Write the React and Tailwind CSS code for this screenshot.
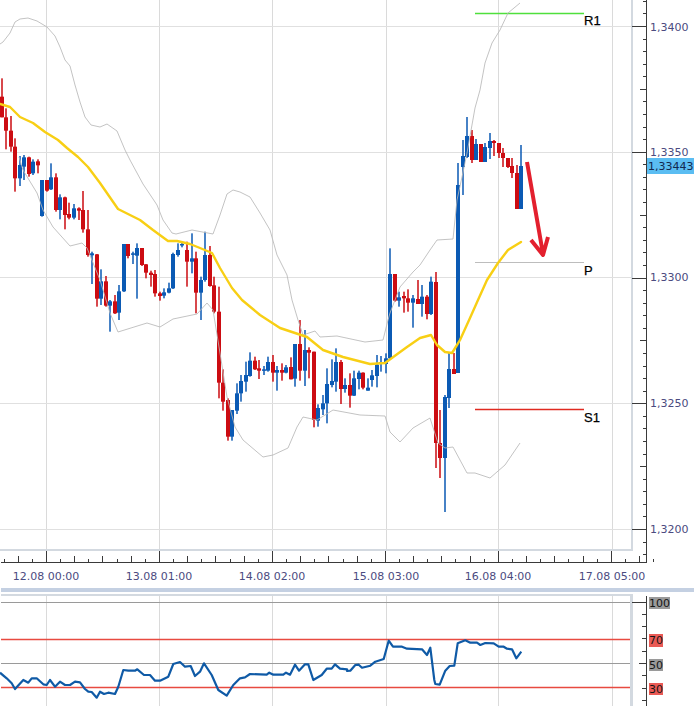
const LABEL = "font-['DejaVu_Sans',sans-serif] text-[11px]";
const PIVOT = "font-['Liberation_Sans',Arial,sans-serif] text-[13px]";
const GRID_X = [46, 159, 272, 386, 498, 612];
const RED = "#cc0c12";
const BLUE = "#0b5ab4";

const z1 = [
  ["r",55,110,172,172],["r",145,172,212,268],["r",168,212,260,275],["r",235,260,355,395],["b",288,315,355,378],
  ["b",285,292,320,360],["r",290,292,342,350],["b",298,305,340,345],["r",298,304,316,340],["b",360,360,468,470],
  ["r",360,360,392,395],["b",310,352,388,390],["r",340,352,450,455],["b",403,412,450,478],["r",410,412,465,508],
  ["r",428,462,473,478],["b",432,445,473,478],["r",442,445,452,480],["r",393,450,508,518],["r",450,508,585,590],
  ["b",575,580,586,672],["r",582,583,716,740],["b",628,664,716,735],["r",648,664,737,740],["b",720,724,737,815],
  ["r",705,724,760,762],["b",675,694,758,780],["b",552,552,694,696],["r",552,552,588,595],["b",575,580,582,612],
  ["b",550,564,587,716],["r",564,564,615,618],["r",612,613,638,655],["r",632,638,645,680],["r",630,642,700,710],
  ["r",695,700,708,722],["b",685,697,707,715],["b",668,685,698,700],["b",578,582,685,687],["b",550,570,585,590],
  ["b",548,552,556,562],["r",545,570,605,680],["b",520,595,605,640],["r",575,595,698,760],["b",650,660,698,780],
  ["b",515,585,660,665],["r",558,585,678,680],["r",650,676,755,760],
].map(([c, a, b, d, e]) => [c, 60 + a / 3, 60 + b / 3, 60 + d / 3, 60 + e / 3]);

const z2 = [
  ["r",170,245,458,505],["r",418,458,515,542],["r",505,510,620,632],["b",540,540,620,632],["b",460,490,542,552],
  ["b",435,453,490,515],["b",395,435,455,485],["b",367,392,438,440],["r",380,392,418,420],["r",390,415,422,447],
  ["b",408,418,422,435],["b",380,396,422,425],["r",375,396,428,455],["b",408,420,428,482],["r",400,420,428,452],
  ["b",405,412,428,430],["r",382,411,448,448],["b",345,342,446,470],["r",270,342,422,452],["b",300,360,422,468],
  ["r",352,360,368,445],["r",365,365,570,592],["b",523,534,572,590],["b",495,520,538,555],["b",415,462,520,580],
  ["b",388,453,465,472],["b",355,396,455,485],["r",390,396,477,522],["b",445,465,477,488],["r",430,465,497,533],
  ["b",422,445,497,498],["b",422,428,447,478],["r",427,428,473,478],["b",445,473,482,482],["b",420,436,450,470],
  ["b",375,404,438,472],["b",378,396,402,425],["b",370,385,402,430],["b",55,132,385,388],["r",132,132,212,215],
  ["b",185,202,212,230],["r",185,198,205,248],["r",178,205,218,245],["b",195,205,218,293],["r",150,207,222,222],
  ["b",165,200,222,260],["r",195,200,252,268],["b",140,155,252,255],
].map(([c, a, b, d, e]) => [c, 230 + a / 3, 230 + b / 3, 230 + d / 3, 230 + e / 3]);

const real = [
  ["r",272,282,443,468],["r",410,443,458,478],["b",395,397,458,512],["b",353,369,398,408],["r",353,369,374,374],
  ["b",163,185,373,373],["b",140,156,167,195],["b",117,136,157,158],["r",130,136,160,163],["b",139,144,160,160],
  ["r",144,144,162,162],["b",143,147,162,162],["b",133,141,148,159],["r",140,141,143,156],["r",143,143,153,158],
  ["r",148,153,158,167],["r",158,158,167,168],["r",158,166,173,178],["r",165,173,209,209],["b",145,166,209,209],
];

const candles = [...z1, ...z2, ...real];

const upper = "0,44 3,42 10,33 15,22 20,19 28,18 37,21 47,27 55,36 60,47 65,60 70,66 75,85 80,102 85,117 91,125 100,127 107,124 117,131 125,150 130,160 143,184 157,205 163,220 172,233 176,234 192,230 213,234 220,215 227,194 233,190 240,192 250,197 260,213 270,230 277,255 287,275 292,300 298,320 303,335 315,331 320,337 337,336 365,342 383,340 388,320 390,313 400,287 413,272 420,265 430,250 437,240 453,239 457,200 462,177 467,153 475,108 480,90 485,63 492,43 500,30 508,13 520,3";
const lower = "19,157 23,170 37,193 43,210 53,227 70,246 82,243 87,248 100,280 110,313 118,332 147,323 160,327 173,319 197,314 207,303 213,310 220,353 227,397 235,427 243,440 263,457 273,455 288,448 297,427 303,417 317,420 333,410 360,415 385,416 390,432 400,442 413,428 430,418 438,443 445,448 453,447 467,473 475,473 490,478 505,465 520,443";
const ma = "0,104 10,107 20,117 33,123 45,132 58,140 67,148 78,157 88,167 100,183 118,209 140,220 153,230 168,241 177,241 190,244 200,248 212,253 220,268 232,288 242,300 260,315 280,328 307,337 323,350 343,357 370,364 385,363 407,347 420,338 431,335 437,345 445,352 452,353 457,345 460,340 470,318 478,300 487,280 498,263 508,250 521,242";

const rsiA = [[0,398],[20,415],[35,430],[45,447],[70,420],[85,428],[95,415],[110,415],[130,433],[140,435],[150,420],[165,440],[180,425],[195,435],[210,435],[225,425],[240,427],[255,447],[265,455],[275,456],[290,473],[300,455],[312,462],[325,458],[345,462],[355,440],[370,390],[385,392],[405,392],[412,388],[432,405],[450,405],[465,422],[480,422],[505,410],[520,372],[540,366],[555,380],[572,378],[585,408],[600,395],[612,370],[635,405],[655,450],[680,467],[700,435],[720,415],[735,412],[750,402],[800,404],[808,398],[820,404],[850,404],[858,398],[870,404],[885,374],[897,392],[915,373],[925,373],[940,420],[965,405],[980,386],[995,386],[1005,373],[1020,386],[1041,388]];
const rsiB = [[0,393],[10,392],[25,375],[35,374],[45,383],[70,377],[85,365],[110,357],[125,302],[138,320],[165,320],[180,326],[225,328],[240,345],[250,323],[262,420],[265,432],[278,434],[295,392],[308,378],[322,377],[332,310],[355,301],[370,308],[390,308],[400,315],[415,309],[440,310],[455,320],[470,320],[480,326],[495,328],[508,355],[523,335]];
const rsi = [
  ...rsiA.map(([x, y]) => `${(x / 3).toFixed(1)},${(540 + y / 3).toFixed(1)}`),
  ...rsiB.map(([x, y]) => `${(347 + x / 3).toFixed(1)},${(540 + y / 3).toFixed(1)}`),
].join(" ");

const priceTicks = Array.from({ length: 45 }, (_, i) => {
  const k = i - 2;
  const y = 26 + k * 12.575;
  const m = ((k % 10) + 10) % 10;
  return { y: Math.round(y) + 0.5, x: m === 0 ? 632 : m === 5 ? 640 : 643 };
});

const timeTicks = Array.from({ length: 47 }, (_, i) => {
  const x = 46 + (i - 3) * 14.12;
  const k = ((i - 3) % 8 + 8) % 8;
  return { x: Math.round(x) + 0.5, top: k === 0 ? 551 : k % 2 === 0 ? 556 : 559 };
});

const rsiTicks = [602, 614, 626, 638, 651, 663, 675, 688, 700];
const rsiLevels = [
  { y: 602, c: "#9a9a9a", w: 1 },
  { y: 639, c: "#e84a40", w: 1.3 },
  { y: 663, c: "#9a9a9a", w: 1 },
  { y: 687, c: "#e84a40", w: 1.3 },
];
const rsiLabels = [
  { t: "100", x: 649, w: 21, y: 597, h: 12, b: 607, bg: "#9a9a9a" },
  { t: "70", x: 649, w: 14, y: 634, h: 13, b: 644, bg: "#ea5a55" },
  { t: "50", x: 649, w: 14, y: 659, h: 12, b: 669, bg: "#9a9a9a" },
  { t: "30", x: 649, w: 14, y: 683, h: 12, b: 693, bg: "#ea5a55" },
];
const prices = [["1,3400", 31], ["1,3350", 156], ["1,3300", 281], ["1,3250", 407], ["1,3200", 533]];
const times = ["12.08 00:00", "13.08 01:00", "14.08 02:00", "15.08 03:00", "16.08 04:00", "17.08 05:00"];

function Candle({ i, d }) {
  const [c, wt, bt, bb, wb] = d;
  const color = c === "r" ? RED : BLUE;
  const x = Math.round(1.67 + i * 4.52 - 2);
  return (
    <g fill={color}>
      <rect x={x + 1.25} y={wt} width="1.5" height={Math.max(wb - wt, 1)} />
      <rect x={x} y={bt} width="4" height={Math.max(bb - bt, 1.5)} />
    </g>
  );
}

function MainPlot() {
  return (
    <svg viewBox="0 0 631 549" className="block w-[631px] h-[549px]">
      {GRID_X.map((x) => (
        <line key={x} x1={x + 0.5} x2={x + 0.5} y1="0" y2="549" stroke="#dadada" />
      ))}
      {[26, 152, 277, 403, 529].map((y) => (
        <line key={y} x1="0" x2="631" y1={y + 0.5} y2={y + 0.5} stroke="#e0e0e0" />
      ))}
      <line x1="475" x2="584" y1="13.5" y2="13.5" stroke="#4fe03c" strokeWidth="1.5" />
      <line x1="475" x2="584" y1="262.5" y2="262.5" stroke="#bdbdbd" />
      <line x1="475" x2="584" y1="409.5" y2="409.5" stroke="#e02a20" strokeWidth="1.5" />
      {candles.map((d, i) => (
        <Candle key={i} i={i} d={d} />
      ))}
      <polyline points={upper} fill="none" stroke="#b8b8b8" strokeWidth="0.85" />
      <polyline points={lower} fill="none" stroke="#b8b8b8" strokeWidth="0.85" />
      <polyline points={ma} fill="none" stroke="#f8cf14" strokeWidth="2.4" strokeLinejoin="round" strokeLinecap="round" />
      <path d="M527 162 L543 254 M531 240 L543 255 L548 237" fill="none" stroke="#e3202e" strokeWidth="4" strokeLinejoin="round" />
      <text x="584" y="25" fill="#000" stroke="#000" strokeWidth="0.25" className={PIVOT}>R1</text>
      <text x="584" y="275" fill="#000" stroke="#000" strokeWidth="0.25" className={PIVOT}>P</text>
      <text x="584" y="422" fill="#000" stroke="#000" strokeWidth="0.25" className={PIVOT}>S1</text>
    </svg>
  );
}

function PriceAxis() {
  return (
    <svg viewBox="633 0 61 551" className="block w-[61px] h-[551px] overflow-visible">
      <line x1="646.5" x2="646.5" y1="0" y2="562" stroke="#3a3a3a" />
      {priceTicks.map((t, i) => (
        <line key={i} x1={t.x} x2="646" y1={t.y} y2={t.y} stroke="#3a3a3a" />
      ))}
      {prices.map(([p, y]) => (
        <text key={p} x="650" y={y} fill="#4b4b80" className={LABEL}>{p}</text>
      ))}
      <rect x="647" y="158" width="47" height="16" fill="#5bbdf2" />
      <text x="648" y="170" fill="#12284f" className={LABEL}>1,33443</text>
    </svg>
  );
}

function TimeAxis() {
  return (
    <svg viewBox="0 551 694 37" className="block w-[694px] h-[37px] overflow-visible">
      <line x1="1" x2="647" y1="562.5" y2="562.5" stroke="#3a3a3a" />
      {timeTicks.map((t, i) => (
        <line key={i} x1={t.x} x2={t.x} y1={t.top} y2="562" stroke="#3a3a3a" />
      ))}
      {times.map((t, i) => (
        <text key={t} x={GRID_X[i]} y="580" textAnchor="middle" fill="#4b4b80" className={LABEL}>{t}</text>
      ))}
    </svg>
  );
}

function RsiPlot() {
  return (
    <svg viewBox="0 596 630 110" className="block w-[630px] h-[110px]">
      {GRID_X.map((x) => (
        <line key={x} x1={x + 0.5} x2={x + 0.5} y1="596" y2="706" stroke="#dadada" />
      ))}
      {rsiLevels.map((l) => (
        <line key={l.y} x1="1" x2="630" y1={l.y + 0.5} y2={l.y + 0.5} stroke={l.c} strokeWidth={l.w} />
      ))}
      <polyline points={rsi} fill="none" stroke="#0f5aa6" strokeWidth="2.2" strokeLinejoin="round" />
    </svg>
  );
}

function RsiAxis() {
  return (
    <svg viewBox="633 596 61 110" className="block w-[61px] h-[110px] overflow-visible">
      <line x1="646.5" x2="646.5" y1="596" y2="706" stroke="#3a3a3a" />
      {rsiTicks.map((y, i) => (
        <line
          key={y}
          x1={i === 0 ? 632 : i === 5 ? 639 : 642}
          x2="646"
          y1={y + 0.5}
          y2={y + 0.5}
          stroke="#3a3a3a"
        />
      ))}
      {rsiLabels.map((l) => (
        <g key={l.t}>
          <rect x={l.x} y={l.y} width={l.w} height={l.h} fill={l.bg} />
          <text x={l.x} y={l.b} fill="#151515" className={LABEL}>{l.t}</text>
        </g>
      ))}
    </svg>
  );
}

export default function App() {
  return (
    <div className="w-[694px] h-[706px] bg-white overflow-hidden flex flex-col">
      <div className="flex h-[551px] shrink-0">
        <div className="w-[633px] h-[551px] border-r-2 border-b-2 border-[#d3d9e0]">
          <MainPlot />
        </div>
        <PriceAxis />
      </div>
      <TimeAxis />
      <div className="h-1 ml-px shrink-0 bg-[#c4d0e2]" />
      <div className="h-[2px] mt-[2px] ml-px shrink-0 w-[632px] bg-[#d3d9e0]" />
      <div className="flex h-[110px] shrink-0">
        <div className="w-[633px] border-r-[3px] border-[#d3d9e0]">
          <RsiPlot />
        </div>
        <RsiAxis />
      </div>
    </div>
  );
}
